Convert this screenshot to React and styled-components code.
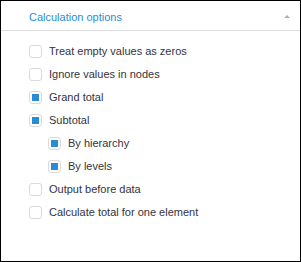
import React, { useState } from 'react';
import styled, { createGlobalStyle } from 'styled-components';

const GlobalStyle = createGlobalStyle`
  html, body {
    margin: 0;
    padding: 0;
    background: #fff;
  }
  * {
    box-sizing: border-box;
  }
`;

const initialOptions = [
  { id: 'zeros', label: 'Treat empty values as zeros', checked: false, level: 0 },
  { id: 'nodes', label: 'Ignore values in nodes', checked: false, level: 0 },
  { id: 'grand', label: 'Grand total', checked: true, level: 0 },
  { id: 'subtotal', label: 'Subtotal', checked: true, level: 0 },
  { id: 'hierarchy', label: 'By hierarchy', checked: true, level: 1 },
  { id: 'levels', label: 'By levels', checked: true, level: 1 },
  { id: 'before', label: 'Output before data', checked: false, level: 0 },
  { id: 'one', label: 'Calculate total for one element', checked: false, level: 0 },
];

const App = () => {
  const [options, setOptions] = useState(initialOptions);

  const toggle = (id) => {
    setOptions((prev) =>
      prev.map((o) => (o.id === id ? { ...o, checked: !o.checked } : o))
    );
  };

  return (
    <>
      <GlobalStyle />
      <Panel>
        <Header>
          <Title>Calculation options</Title>
          <Collapse />
        </Header>
        <List>
          {options.map((o) => (
            <Row key={o.id} $level={o.level} onClick={() => toggle(o.id)}>
              <Box>{o.checked && <Mark />}</Box>
              <Label>{o.label}</Label>
            </Row>
          ))}
        </List>
      </Panel>
    </>
  );
};

export default App;

// Styled Components
const Panel = styled.div`
  width: 301px;
  height: 262px;
  border: 1px solid #000;
  background: #fff;
  font-family: "Liberation Sans", Arial, sans-serif;
  font-size: 11px;
`;

const Header = styled.div`
  height: 30px;
  display: flex;
  align-items: center;
  justify-content: space-between;
  padding: 2px 10px 0 28px;
  border-bottom: 1px solid #dcdcdc;
`;

const Title = styled.span`
  color: #2a8dd4;
  font-size: 11px;
`;

const Collapse = styled.span`
  width: 0;
  height: 0;
  border-left: 3px solid transparent;
  border-right: 3px solid transparent;
  border-bottom: 3px solid #b0b0b0;
`;

const List = styled.div`
  display: flex;
  flex-direction: column;
  padding: 9px 0 0 28px;
`;

const Row = styled.div`
  height: 23px;
  display: flex;
  align-items: center;
  gap: 7px;
  padding-left: ${(p) => p.$level * 19}px;
  cursor: pointer;
`;

const Box = styled.span`
  width: 13px;
  height: 13px;
  border: 1px solid #dadada;
  border-radius: 3px;
  background: #fff;
  display: flex;
  align-items: center;
  justify-content: center;
`;

const Mark = styled.span`
  width: 7px;
  height: 7px;
  background: #2a8dd4;
`;

const Label = styled.span`
  color: #333340;
  line-height: 13px;
`;
